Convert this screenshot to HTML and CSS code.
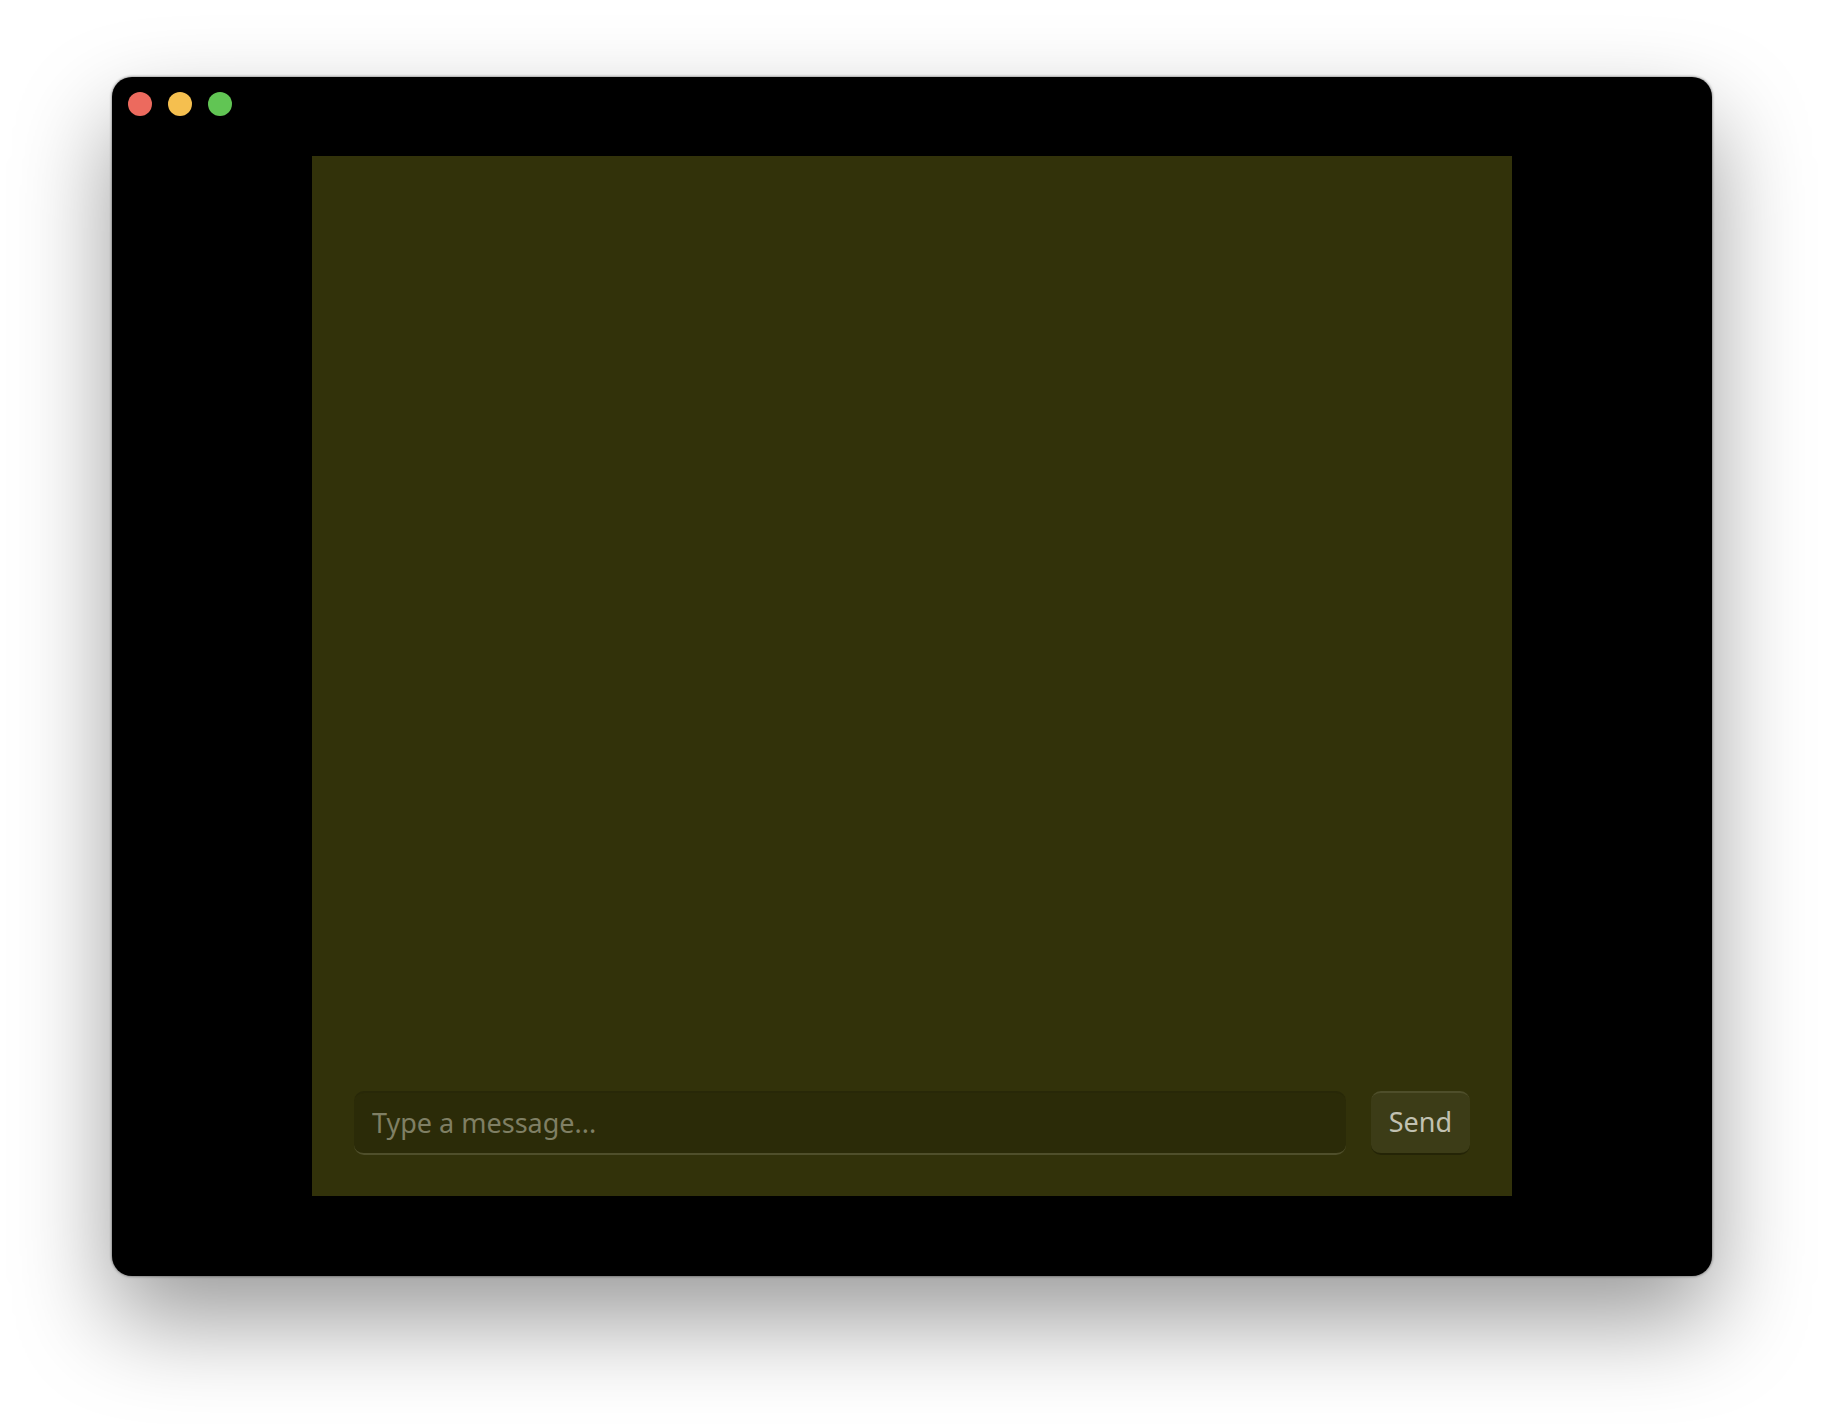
FILE: index.html
```html
<!DOCTYPE html>
<html lang="en">
<head>
<meta charset="utf-8">
<title>Chat</title>
<link rel="stylesheet" href="styles.css">
</head>
<body>
<div class="window">
  <header class="titlebar">
    <button class="light light-close" type="button" aria-label="Close"></button>
    <button class="light light-minimize" type="button" aria-label="Minimize"></button>
    <button class="light light-zoom" type="button" aria-label="Zoom"></button>
  </header>
  <main class="chat">
    <section class="messages" aria-label="Messages"></section>
    <form class="composer">
      <input class="message-input" type="text" placeholder="Type a message..." aria-label="Message">
      <button class="send" type="button">Send</button>
    </form>
  </main>
</div>
</body>
</html>
```
FILE: styles.css
```css
* {
  box-sizing: border-box;
}

body {
  margin: 0;
  min-height: 100vh;
  padding: 77px 112px 148px;
  display: flex;
  background: #fff;
  font-family: "Noto Sans", sans-serif;
  font-size: 27px;
  line-height: 40px;
}

.window {
  flex: 1;
  display: flex;
  flex-direction: column;
  padding-bottom: 80px;
  border-radius: 20px;
  background: #000;
  box-shadow: 0 0 3px rgba(0, 0, 0, 0.6), 0 44px 96px rgba(0, 0, 0, 0.4);
}

.titlebar {
  display: flex;
  gap: 16px;
  height: 79px;
  padding: 15px 16px;
}

.light {
  width: 24px;
  height: 24px;
  padding: 0;
  border: 0;
  border-radius: 50%;
}

.light-close {
  background: #ec6a5e;
}

.light-minimize {
  background: #f5bf4f;
}

.light-zoom {
  background: #61c554;
}

.chat {
  flex: 1;
  display: flex;
  flex-direction: column;
  width: 75%;
  margin: 0 auto;
  padding: 41px 42px;
  background: #32320a;
}

.messages {
  flex: 1;
}

.composer {
  display: flex;
  gap: 25px;
}

.message-input,
.send {
  height: 64px;
  margin: 0;
  padding: 0 18px 2px;
  border: 0 solid;
  border-width: 2px 0;
  border-radius: 10px;
  font: inherit;
}

.message-input {
  flex: 1;
  min-width: 0;
  border-color: #282808 transparent #4f4f2b;
  background: #2b2b08;
  color: #c1c1b1;
  outline: none;
}

.message-input::placeholder {
  color: #7f7f64;
  opacity: 1;
}

.send {
  border-color: #4e4e2a transparent #242406;
  background: #3c3c17;
  color: #c1c1b1;
}
```
